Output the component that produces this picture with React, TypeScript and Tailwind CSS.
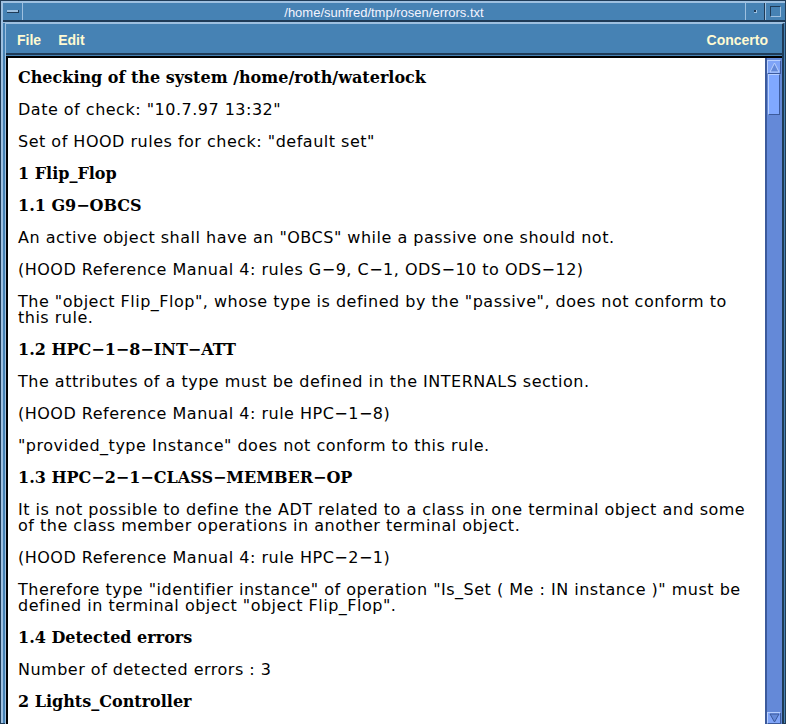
import React from "react";

const body = "font-['DejaVu_Sans',sans-serif] text-[16px] tracking-[0.5px] leading-[16px] text-black";
const head = "font-['DejaVu_Serif',serif] font-bold text-[16px] leading-[16px] text-black";

function P({ children, h }: { children: React.ReactNode; h?: boolean }) {
  return <div className={`${h ? head : body} whitespace-nowrap mb-[16px]`}>{children}</div>;
}

export default function App() {
  return (
    <div className="w-[786px] h-[724px] bg-[#1f3b57] p-[1px] overflow-hidden">
      <div className="w-full h-full bg-[#4682b4] border-t-[2px] border-l-[2px] border-[#9ec0e0] flex flex-col">
        {/* title bar */}
        <div className="h-[19px] flex border-b-[2px] border-[#1f3b57]">
          <div className="w-[20px] border-r border-[#9ec0e0] flex items-center justify-center">
            <div className="w-[12px] h-[3px] bg-[#9ec0e0] border-b border-r border-[#1f3b57]" />
          </div>
          <div className="flex-1 text-center text-[13px] leading-[19px] text-[#f4f4ff] font-['Liberation_Sans',sans-serif]">
            /home/sunfred/tmp/rosen/errors.txt
          </div>
          <div className="w-[20px] border-l border-[#9ec0e0] border-r border-r-[#1f3b57] flex items-center justify-center">
            <div className="w-[3px] h-[3px] bg-[#1f3b57] border-b border-r border-[#9ec0e0]" />
          </div>
          <div className="w-[20px] border-l border-[#9ec0e0] flex items-center justify-center">
            <div className="w-[11px] h-[11px] border border-t-[#1f3b57] border-l-[#1f3b57] border-b-[#9ec0e0] border-r-[#9ec0e0]" />
          </div>
        </div>
        {/* inner frame */}
        <div className="flex-1 flex flex-col border-t border-[#9ec0e0] pl-[2px] pr-[1px] pb-[3px]">
          <div className="flex-1 flex flex-col border-l-[1px] border-t border-[#9ec0e0] border-r-[2px] border-r-[#1f3b57] border-b-[2px] border-b-[#1f3b57]">
            {/* menu bar */}
            <div className="h-[31px] flex items-center justify-between pt-[3px] pl-[11px] pr-[14px] font-['Liberation_Sans',sans-serif] font-bold text-[14px] text-[#fffad2] border-b-[2px] border-[#1f3b57]">
              <div className="flex gap-[17px]">
                <span>File</span>
                <span>Edit</span>
              </div>
              <span>Concerto</span>
            </div>
            {/* content */}
            <div className="flex-1 flex mt-[1px] border-t-[2px] border-l-[2px] border-black bg-white">
              <div className="flex-1 pl-[10px] pt-[12px] overflow-hidden">
                <P h>Checking of the system /home/roth/waterlock</P>
                <P>Date of check: "10.7.97 13:32"</P>
                <P>Set of HOOD rules for check: "default set"</P>
                <P h>1 Flip_Flop</P>
                <P h>1.1 G9−OBCS</P>
                <P>An active object shall have an "OBCS" while a passive one should not.</P>
                <P>(HOOD Reference Manual 4: rules G−9, C−1, ODS−10 to ODS−12)</P>
                <P>
                  The "object Flip_Flop", whose type is defined by the "passive", does not conform to
                  <br />
                  this rule.
                </P>
                <P h>1.2 HPC−1−8−INT−ATT</P>
                <P>The attributes of a type must be defined in the INTERNALS section.</P>
                <P>(HOOD Reference Manual 4: rule HPC−1−8)</P>
                <P>"provided_type Instance" does not conform to this rule.</P>
                <P h>1.3 HPC−2−1−CLASS−MEMBER−OP</P>
                <P>
                  It is not possible to define the ADT related to a class in one terminal object and some
                  <br />
                  of the class member operations in another terminal object.
                </P>
                <P>(HOOD Reference Manual 4: rule HPC−2−1)</P>
                <P>
                  Therefore type "identifier instance" of operation "Is_Set ( Me : IN instance )" must be
                  <br />
                  defined in terminal object "object Flip_Flop".
                </P>
                <P h>1.4 Detected errors</P>
                <P>Number of detected errors : 3</P>
                <P h>2 Lights_Controller</P>
              </div>
              {/* scrollbar */}
              <div className="w-[17px] bg-[#6489d8] border-l-[2px] border-[#3c5a9c] flex flex-col justify-between py-[2px] pr-[1px]">
                <div>
                  <div className="h-[14px] bg-[#7fa4f8] flex items-center justify-center border-t border-l border-[#b8d0ff] border-b border-r border-b-[#3c5a9c] border-r-[#3c5a9c]">
                    <svg width="11" height="11" viewBox="0 0 11 11">
                      <path d="M5.5 1 L10 10 L1 10 Z" fill="#6489d8" stroke="#b8d0ff" strokeWidth="1" />
                    </svg>
                  </div>
                  <div className="h-[41px] mx-[1px] bg-[#80a8ff] border-t border-l border-[#b8d0ff] border-b border-r border-b-[#3c5a9c] border-r-[#3c5a9c]" />
                </div>
                <div className="h-[12px] bg-[#7fa4f8] flex items-center justify-center border-t border-l border-[#b8d0ff] border-b border-r border-b-[#3c5a9c] border-r-[#3c5a9c]">
                  <svg width="11" height="10" viewBox="0 0 11 10">
                    <path d="M1 1 L10 1 L5.5 9 Z" fill="#6489d8" stroke="#3c5a9c" strokeWidth="1" />
                  </svg>
                </div>
              </div>
            </div>
          </div>
        </div>
      </div>
    </div>
  );
}
